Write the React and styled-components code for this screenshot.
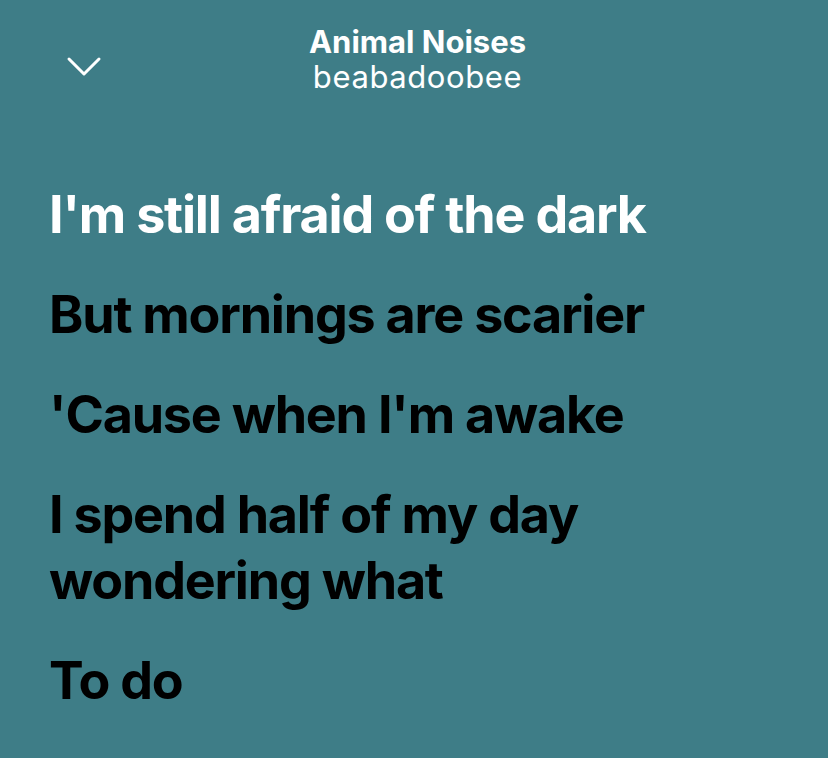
import React from "react";
import styled, { createGlobalStyle } from "styled-components";

const Global = createGlobalStyle`
  html, body { margin: 0; padding: 0; background: #3e7d87; }
  body { font-family: Inter, "Noto Sans", sans-serif; }
`;

const Screen = styled.div`
  width: 828px;
  height: 758px;
  background: #3e7d87;
  overflow: hidden;
  display: flex;
  flex-direction: column;
`;

const Header = styled.header`
  display: grid;
  grid-template-columns: 120px 1fr 120px;
  align-items: center;
  padding-top: 23px;
  height: 72px;
`;

const IconButton = styled.button`
  background: none;
  border: 0;
  padding: 0;
  margin-left: 66px;
  width: 36px;
  height: 36px;
  display: flex;
  align-items: center;
  justify-content: center;
  color: #fff;
  margin-top: 16px;
`;

const TitleBlock = styled.div`
  display: flex;
  flex-direction: column;
  align-items: center;
  color: #fff;
  margin-left: 7px;
`;

const Title = styled.div`
  font-weight: 700;
  font-size: 31px;
  letter-spacing: 0px;
  line-height: 35px;
`;

const Artist = styled.div`
  font-weight: 400;
  font-size: 31px;
  letter-spacing: 0.6px;
  line-height: 35px;
`;

const Lyrics = styled.div`
  display: flex;
  flex-direction: column;
  gap: 34px;
  padding: 87px 130px 0 49px;
`;

const Line = styled.div`
  font-weight: 700;
  font-size: 52px;
  line-height: 66px;
  letter-spacing: -1.2px;
  color: ${(p) => (p.$active ? "#ffffff" : "#000000")};
`;

const lines = [
  { text: "I'm still afraid of the dark", active: true },
  { text: "But mornings are scarier" },
  { text: "'Cause when I'm awake" },
  { text: "I spend half of my day wondering what" },
  { text: "To do" },
];

export default function App() {
  return (
    <Screen>
      <Global />
      <Header>
        <IconButton aria-label="Close">
          <svg width="36" height="22" viewBox="0 0 36 22" fill="none">
            <path d="M3 3 L18 18 L33 3" stroke="#fff" strokeWidth="3" strokeLinecap="round" strokeLinejoin="round" />
          </svg>
        </IconButton>
        <TitleBlock>
          <Title>Animal Noises</Title>
          <Artist>beabadoobee</Artist>
        </TitleBlock>
        <div />
      </Header>
      <Lyrics>
        {lines.map((l, i) => (
          <Line key={i} $active={l.active}>
            {l.text}
          </Line>
        ))}
      </Lyrics>
    </Screen>
  );
}
